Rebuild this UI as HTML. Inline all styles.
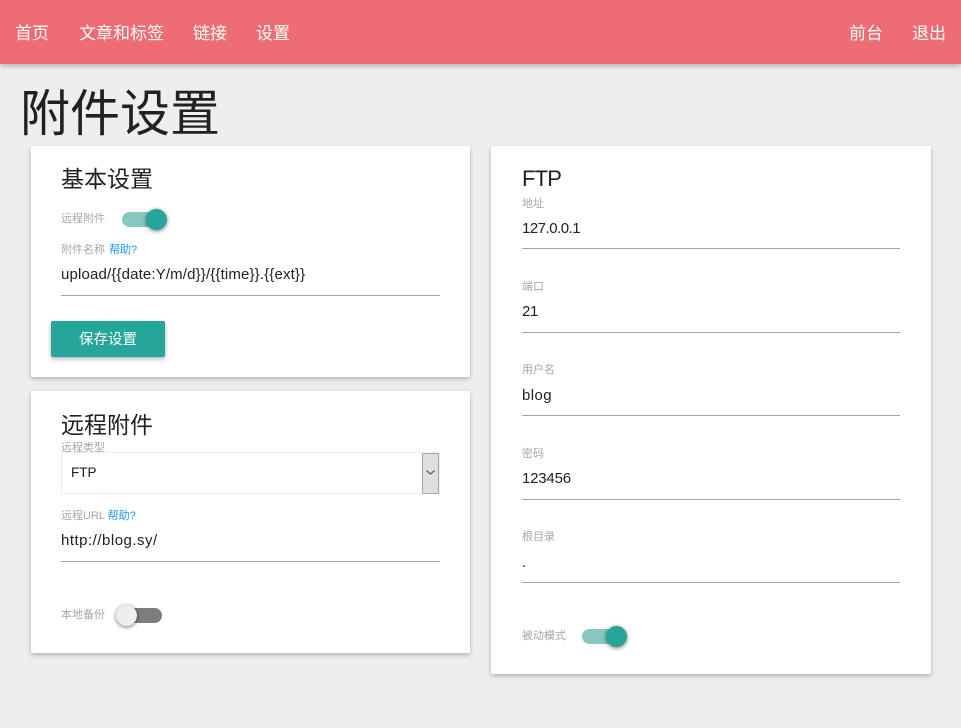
<!DOCTYPE html>
<html lang="zh"><head><meta charset="utf-8"><title>附件设置</title>
<style>
html,body{margin:0;padding:0}
body{width:961px;height:728px;background:#eee;position:relative;overflow:hidden;font-family:"Liberation Sans","Noto Sans CJK SC",sans-serif;color:#212121}
.a{position:absolute;white-space:nowrap}
.nav{position:absolute;left:0;top:0;width:961px;height:64px;background:#ee6c73;box-shadow:0 2px 5px rgba(0,0,0,.26)}
.nav span{position:absolute;top:23px;color:#fff;font-size:17px;line-height:22px;white-space:nowrap}
.card{position:absolute;background:#fff;border-radius:2px;box-shadow:0 2px 5px rgba(0,0,0,.26)}
.h{font-size:23px;line-height:32px;color:#212121}
.l{font-size:11px;line-height:14px;color:#a6a6a6}
.l b{font-weight:400;color:#2196f3}
.v{font-size:15px;line-height:20px;color:#212121}
.line{position:absolute;height:1px;background:#a3a3a3}
.track{position:absolute;width:36px;height:15px;border-radius:8px}
.knob{position:absolute;width:21px;height:21px;border-radius:50%;box-shadow:0 1px 4px rgba(0,0,0,.55)}
.on{background:#86c8c0}.on+.knob{background:#26a69a}
.off{background:#7d7d7d}.off+.knob{background:#eee}
</style></head><body>
<div class="nav">
<span style="left:15px">首页</span><span style="left:79px">文章和标签</span><span style="left:193px">链接</span><span style="left:256px">设置</span>
<span style="left:849px">前台</span><span style="left:912px">退出</span>
</div>
<div class="a" style="left:20px;top:82px;font-size:50px;line-height:64px;color:#212121">附件设置</div>

<div class="card" style="left:31px;top:146px;width:439px;height:231px"></div>
<div class="a h" style="left:61px;top:163px">基本设置</div>
<div class="a l" style="left:61px;top:212px">远程附件</div>
<div class="track on" style="left:122px;top:212px"></div><div class="knob" style="left:146px;top:209px"></div>
<div class="a l" style="left:61px;top:243px">附件名称 <b style="margin-left:1px">帮助?</b></div>
<div class="a v" style="left:61px;top:265px;letter-spacing:.15px">upload/{{date:Y/m/d}}/{{time}}.{{ext}}</div>
<div class="line" style="left:61px;top:295px;width:379px"></div>
<div class="a" style="left:51px;top:321px;width:114px;height:36px;background:#26a69a;border-radius:2px;box-shadow:0 2px 5px rgba(0,0,0,.3);color:#fff;font-size:14.5px;line-height:39px;text-align:center">保存设置</div>

<div class="card" style="left:31px;top:391px;width:439px;height:262px"></div>
<div class="a h" style="left:61px;top:409px">远程附件</div>
<div class="a" style="left:61px;top:452px;width:377px;height:40px;border:1px solid #f0f0f0;border-radius:2px;background:#fff"></div>
<div class="a l" style="left:61px;top:441px">远程类型</div>
<div class="a v" style="left:71px;top:463px;font-size:13.5px">FTP</div>
<div class="a" style="left:422px;top:453px;width:15px;height:39px;background:#dfdfdf;border:1px solid #a6a6a6;border-radius:1px"></div>
<svg class="a" style="left:422px;top:453px" width="17" height="41" viewBox="0 0 17 41"><path d="M4.5 17.5 L8.5 21 L12.5 17.5" fill="none" stroke="#444" stroke-width="1.1"/></svg>
<div class="a l" style="left:61px;top:509px">远程URL <b>帮助?</b></div>
<div class="a v" style="left:61px;top:531px;letter-spacing:.5px">http://blog.sy/</div>
<div class="line" style="left:61px;top:561px;width:379px"></div>
<div class="a l" style="left:61px;top:608px">本地备份</div>
<div class="track off" style="left:126px;top:608px"></div><div class="knob" style="left:116px;top:605px"></div>

<div class="card" style="left:491px;top:146px;width:440px;height:528px"></div>
<div class="a h" style="left:522px;top:163px;font-size:22px;letter-spacing:-.8px">FTP</div>
<div class="a l" style="left:522px;top:197px">地址</div>
<div class="a v" style="left:522px;top:219px;letter-spacing:-.5px">127.0.0.1</div>
<div class="line" style="left:522px;top:248px;width:378px"></div>
<div class="a l" style="left:522px;top:280px">端口</div>
<div class="a v" style="left:522px;top:302px;letter-spacing:-.3px">21</div>
<div class="line" style="left:522px;top:332px;width:378px"></div>
<div class="a l" style="left:522px;top:363px">用户名</div>
<div class="a v" style="left:522px;top:386px;letter-spacing:.4px">blog</div>
<div class="line" style="left:522px;top:415px;width:378px"></div>
<div class="a l" style="left:522px;top:447px">密码</div>
<div class="a v" style="left:522px;top:469px;letter-spacing:-.2px">123456</div>
<div class="line" style="left:522px;top:499px;width:378px"></div>
<div class="a l" style="left:522px;top:530px">根目录</div>
<div class="a v" style="left:522px;top:553px">.</div>
<div class="line" style="left:522px;top:582px;width:378px"></div>
<div class="a l" style="left:522px;top:629px">被动模式</div>
<div class="track on" style="left:582px;top:629px"></div><div class="knob" style="left:606px;top:626px"></div>
</body></html>
